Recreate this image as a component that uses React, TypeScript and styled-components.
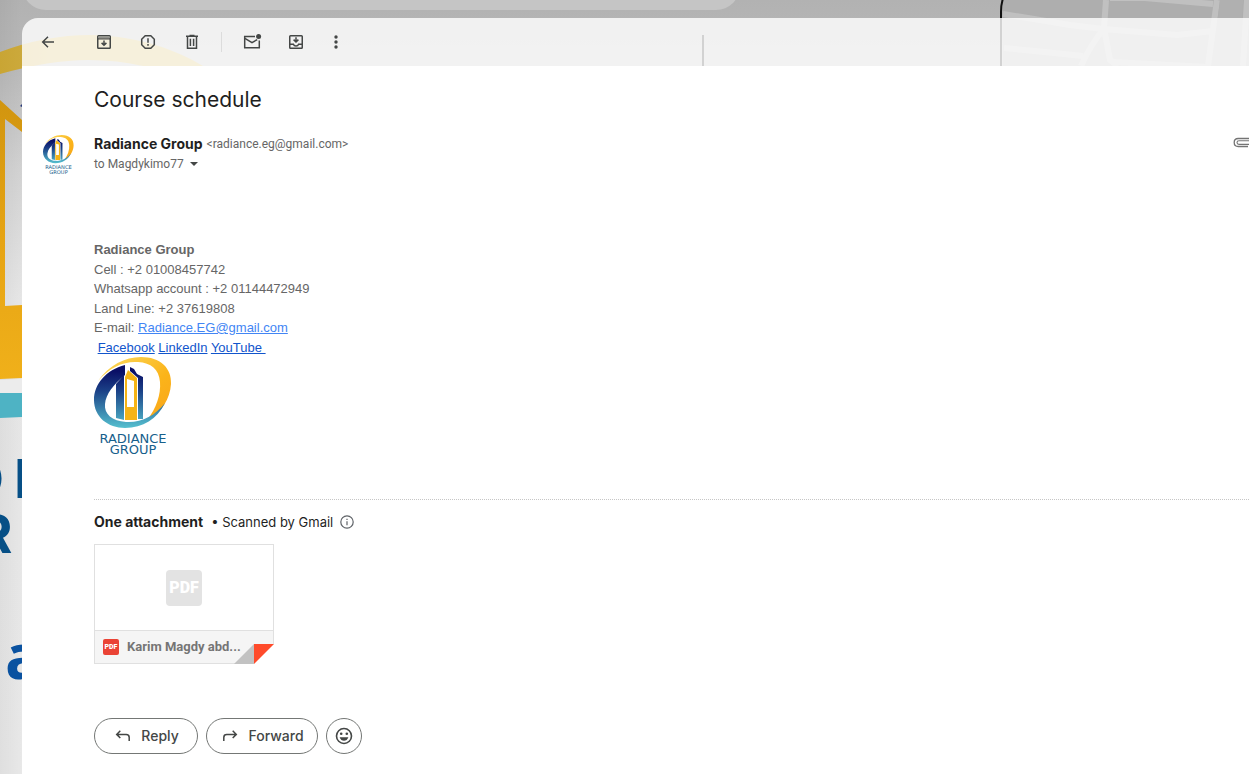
import React from 'react';
import styled, { createGlobalStyle } from 'styled-components';

const GlobalStyle = createGlobalStyle`
  *, *::before, *::after { box-sizing: border-box; }
  body { margin: 0; font-family: Inter, "Liberation Sans", sans-serif; color: #1f1f1f; }
  button { font: inherit; color: inherit; cursor: pointer; }
  svg { display: block; }
`;

const Page = styled.div`
  position: relative;
  display: flex;
  flex-direction: column;
  min-height: 100vh;
  overflow: hidden;
  background: linear-gradient(#b2b2b2 0, #b9b9b9 66px, #d2d2d2 170px, #e6e6e6 300px, #e8e8e8 100%);
`;

const WallpaperSvg = styled.svg`
  position: absolute;
  top: 0;
  left: 0;
  width: 100%;
  height: 100%;
`;

const TopStrip = styled.header`
  position: relative;
  display: flex;
  align-items: flex-end;
  height: 18px;
  padding: 0 0 8px 22px;
  overflow: hidden;
`;

const SearchBar = styled.div`
  flex: 0 1 718px;
  height: 48px;
  border-radius: 24px;
  background: #c5c5c5;
`;

const Panel = styled.main`
  position: relative;
  display: flex;
  flex: 1;
  flex-direction: column;
  margin-left: 22px;
  border-top-left-radius: 16px;
  overflow: hidden;
`;

const Toolbar = styled.nav`
  display: flex;
  align-items: center;
  gap: 16px;
  height: 48px;
  padding-left: 12px;
  background: rgba(255, 255, 255, 0.81);
`;

const IconButton = styled.button<{ $after?: number }>`
  display: grid;
  place-items: center;
  width: 28px;
  height: 28px;
  margin: 0 ${p => p.$after ?? 0}px 0 0;
  padding: 0;
  border: 0;
  background: none;
  color: #444746;
`;

const Divider = styled.span`
  width: 1px;
  height: 20px;
  margin-left: -1px;
  background: #dcdcdc;
`;

const Message = styled.article`
  flex: 1;
  padding: 16px 0 20px 72px;
  background: #fff;
`;

const Subject = styled.h1`
  margin: 0;
  font: 400 21px/36px Inter, sans-serif;
`;

const SenderRow = styled.section`
  display: flex;
  align-items: flex-start;
  margin: 16px 0 0 -52px;
`;

const Avatar = styled.div`
  flex: none;
  width: 52px;
  padding: 1px 0 0 1px;
`;

const SenderText = styled.div`
  flex: 1;
`;

const SenderLine = styled.div`
  display: flex;
  align-items: center;
  gap: 4px;
  font: 400 12px/20px Roboto, sans-serif;
  color: #666;
`;

const SenderName = styled.span`
  font: 700 14px/20px Inter, sans-serif;
  color: #1f1f1f;
`;

const Recipient = styled.button`
  display: flex;
  align-items: center;
  gap: 6px;
  padding: 0;
  border: 0;
  background: none;
`;

const ClipIcon = styled.svg`
  flex: none;
`;

const Signature = styled.section`
  margin-top: 66px;
  font: 400 13px/1.5 "Liberation Sans", Arial, sans-serif;
  color: #666;
`;

const SignatureLink = styled.a<{ $light?: boolean }>`
  color: ${p => (p.$light ? '#4285f4' : '#1155cc')};
`;

const Attachments = styled.section`
  margin-top: 44px;
  border-top: 1px dotted #c6c6c6;
`;

const AttachmentTitle = styled.h2`
  display: flex;
  align-items: center;
  margin: 12px 0;
  font: 400 13px/20px Inter, sans-serif;
`;

const AttachmentCount = styled.span`
  margin-right: 8px;
  font: 700 14px/20px Inter, sans-serif;
`;

const InfoIcon = styled.svg`
  margin-left: 6px;
`;

const Card = styled.a`
  position: relative;
  display: flex;
  flex-direction: column;
  width: 180px;
  height: 120px;
  border: 1px solid #e0e0e0;
  color: #757575;
  text-decoration: none;
`;

const Preview = styled.div`
  display: grid;
  flex: 1;
  place-items: center;
`;

const PdfBadge = styled.span<{ $large?: boolean }>`
  display: grid;
  place-items: center;
  width: ${p => (p.$large ? 36 : 16)}px;
  height: ${p => (p.$large ? 36 : 16)}px;
  border-radius: ${p => (p.$large ? 4 : 2)}px;
  background: ${p => (p.$large ? '#e3e3e3' : '#ea4335')};
  color: #fff;
  font: 900 ${p => (p.$large ? 16 : 7)}px/1 Roboto, sans-serif;
`;

const FileBar = styled.div`
  display: flex;
  align-items: center;
  gap: 8px;
  height: 33px;
  padding-left: 8px;
  border-top: 1px solid #e0e0e0;
  background: #f5f5f5;
  font: 700 13px/20px Roboto, sans-serif;
`;

const Fold = styled.svg`
  position: absolute;
  right: -1px;
  bottom: -1px;
`;

const Actions = styled.footer`
  display: flex;
  gap: 8px;
  margin-top: 54px;
`;

const ActionButton = styled.button<{ $width: number }>`
  display: flex;
  align-items: center;
  justify-content: center;
  gap: 8px;
  width: ${p => p.$width}px;
  height: 36px;
  padding: 0;
  border: 1px solid #747775;
  border-radius: 18px;
  background: #fff;
  color: #444746;
  font: 500 14px/20px Inter, sans-serif;
`;

function Wallpaper() {
  return (
    <WallpaperSvg aria-hidden="true">
      <defs>
        <linearGradient id="wallGold" x1="0" y1="100" x2="0" y2="380" gradientUnits="userSpaceOnUse">
          <stop offset="0" stopColor="#d1950f" />
          <stop offset="0.5" stopColor="#e6a414" />
          <stop offset="1" stopColor="#f0b01a" />
        </linearGradient>
        <linearGradient id="wallArc" x1="0" y1="0" x2="60" y2="0" gradientUnits="userSpaceOnUse">
          <stop offset="0" stopColor="#c9a534" />
          <stop offset="1" stopColor="#d0b048" />
        </linearGradient>
        <linearGradient id="wallShade" x1="0" y1="0" x2="22" y2="0" gradientUnits="userSpaceOnUse">
          <stop offset="0" stopColor="#000" stopOpacity="0.04" />
          <stop offset="1" stopColor="#000" stopOpacity="0" />
        </linearGradient>
      </defs>
      <rect width="22" height="100%" fill="url(#wallShade)" />
      <path d="M0 52Q45 35 90 35C140 36 176 50 203 66H143Q118 60 88 60Q50 60 0 74Z" fill="url(#wallArc)" />
      <path d="M0 100L22 120V132L5 119V306L22 305V378L0 379Z" fill="url(#wallGold)" />
      <path d="M20 106L22 104V107Z" fill="#2a3a7a" />
      <path d="M0 380L22 379V393H0Z" fill="#ececec" />
      <path d="M0 393H22V417L0 418Z" fill="#4eb3c4" />
      <g fill="#064f86" fontFamily="Inter, sans-serif" fontWeight="700">
        <text x="-35" y="498" fontSize="54">D</text>
        <text x="14" y="498" fontSize="54">I</text>
        <text x="-23" y="553" fontSize="54">R</text>
      </g>
      <text x="5" y="679" fontSize="62" fontFamily="Open Sans, sans-serif" fontWeight="700" fill="#0a52a0">a</text>
      <path d="M703 35V66" stroke="#111" strokeWidth="2" />
      <path d="M1003 0H1249V66H1003Z" fill="#aeaeae" />
      <g fill="none" stroke="#c0c0c0" strokeWidth="6">
        <path d="M1003 14L1040 20L1070 25L1103 29L1177 35L1213 31" />
        <path d="M1106 0L1104 28L1110 60L1118 66" />
        <path d="M1102 31Q1090 46 1081 66" />
        <path d="M1004 48L1035 51L1083 56" />
        <path d="M1110 -2H1145L1213 4" />
        <path d="M1217 0L1208 66" />
        <path d="M1247 0L1243 66" />
        <path d="M1112 62L1208 67" />
      </g>
      <path d="M1220 0H1243L1239 66H1212Z" fill="#b0b0b0" />
      <path d="M1006 -8Q1001 0 1001 12V66" fill="none" stroke="#111" strokeWidth="2" />
    </WallpaperSvg>
  );
}

function RadianceLogo({ id, width, height }: { id: string; width: number; height: number }) {
  return (
    <svg width={width} height={height} viewBox="0 0 78 98" overflow="visible" role="img" aria-label="Radiance Group">
      <defs>
        <linearGradient id={`${id}Blue`} x1="0" y1="8" x2="0" y2="71" gradientUnits="userSpaceOnUse">
          <stop offset="0.1" stopColor="#0a0f66" />
          <stop offset="0.4" stopColor="#1a3f86" />
          <stop offset="1" stopColor="#55c0cf" />
        </linearGradient>
        <linearGradient id={`${id}Gold`} x1="0" y1="0" x2="1" y2="1">
          <stop offset="0" stopColor="#fbdc62" />
          <stop offset="0.6" stopColor="#fbb41a" />
          <stop offset="1" stopColor="#f9a51a" />
        </linearGradient>
      </defs>
      <path
        d="M4 24C15 8 31 0 47 0C66 0 78 11 77 27C76 42 68 55 54 62C62 51 67 38 66 25C65 12 57 6 44 5C30 4 16 10 4 24Z"
        fill={`url(#${id}Gold)`}
      />
      <path
        d="M31 8C12 13 0 27 0 43C0 60 14 71 31 71C49 71 63 62 71 46C61 59 47 66 32 65C18 64 10 57 11 47C12 37 19 28 31 18Z"
        fill={`url(#${id}Blue)`}
      />
      <path d="M22 27L30 18V63L22 61Z" fill={`url(#${id}Blue)`} />
      <path d="M31 20L34 13L43 21V63H31ZM33 22V50H40V24Z" fill="#f5b416" fillRule="evenodd" />
      <path d="M36 10L40 12L43 17L49 20V62H44V21L36 14Z" fill={`url(#${id}Blue)`} />
      <g fill="#17608c" fontFamily="DejaVu Sans, sans-serif" fontSize="13" textAnchor="middle">
        <text x="39" y="86">RADIANCE</text>
        <text x="39" y="97">GROUP</text>
      </g>
    </svg>
  );
}

function ToolIcon({ children }: { children: React.ReactNode }) {
  return (
    <svg width="20" height="20" viewBox="0 0 20 20" fill="none" stroke="currentColor" strokeWidth="1.5" aria-hidden="true">
      {children}
    </svg>
  );
}

export default function App() {
  return (
    <Page>
      <GlobalStyle />
      <Wallpaper />
      <TopStrip>
        <SearchBar />
      </TopStrip>
      <Panel>
        <Toolbar aria-label="Message tools">
          <IconButton aria-label="Back" $after={12}>
            <ToolIcon>
              <path d="M16 10H5M10 4.7L4.7 10L10 15.3" />
            </ToolIcon>
          </IconButton>
          <IconButton aria-label="Archive">
            <ToolIcon>
              <rect x="3.75" y="3.75" width="12.5" height="12.5" rx="0.8" />
              <path d="M4 5.2H16" stroke="#90918c" />
              <path d="M3.5 6.8H16.5" strokeWidth="1.2" />
              <path d="M10 8.6V13M7.6 10.9L10 13.3L12.4 10.9" />
            </ToolIcon>
          </IconButton>
          <IconButton aria-label="Report spam">
            <ToolIcon>
              <path d="M7.2 3.7H12.8L16.3 7.2V12.8L12.8 16.3H7.2L3.7 12.8V7.2Z" />
              <path d="M10 6.3V10.8M10 12.1V13.7" />
            </ToolIcon>
          </IconButton>
          <IconButton aria-label="Delete">
            <ToolIcon>
              <path d="M4 4.3H16M7.5 3.4H12.5" />
              <path d="M5.5 4.5V16.2H14.5V4.5" />
              <path d="M8.4 6.7V14M11.6 6.7V14" />
            </ToolIcon>
          </IconButton>
          <Divider />
          <IconButton aria-label="Mark as unread">
            <ToolIcon>
              <path d="M13 4.6H2.7V15.8H17.3V8.4" />
              <path d="M2.9 6.4L10 10.6L15.2 7.6" />
              <circle cx="16.6" cy="4.4" r="2.5" fill="currentColor" stroke="none" />
            </ToolIcon>
          </IconButton>
          <IconButton aria-label="Move to inbox" $after={-4}>
            <ToolIcon>
              <rect x="3.75" y="3.75" width="12.5" height="12.5" rx="0.8" />
              <path d="M4 12.2H7.4Q8 14 10 14T12.6 12.2H16" />
              <path d="M10 5.2V9.6M7.6 7.6L10 10L12.4 7.6" />
            </ToolIcon>
          </IconButton>
          <IconButton aria-label="More">
            <ToolIcon>
              <g fill="currentColor" stroke="none">
                <circle cx="10" cy="5" r="1.7" />
                <circle cx="10" cy="10" r="1.7" />
                <circle cx="10" cy="15" r="1.7" />
              </g>
            </ToolIcon>
          </IconButton>
        </Toolbar>
        <Message>
          <Subject>Course schedule</Subject>
          <SenderRow>
            <Avatar>
              <RadianceLogo id="avatar" width={31} height={39} />
            </Avatar>
            <SenderText>
              <SenderLine>
                <SenderName>Radiance Group</SenderName>
                <span>&lt;radiance.eg@gmail.com&gt;</span>
              </SenderLine>
              <SenderLine>
                <Recipient aria-label="Show details">
                  to Magdykimo77
                  <svg width="8" height="4" viewBox="0 0 8 4" aria-hidden="true">
                    <path d="M0 0H8L4 4Z" fill="#444746" />
                  </svg>
                </Recipient>
              </SenderLine>
            </SenderText>
            <ClipIcon width="16" height="18" viewBox="0 0 16 18" fill="none" stroke="#747474" role="img" aria-label="Has attachment">
              <path d="M16 4.5H5.2C2.6 4.5 1.2 6.2 1.2 8.5S2.6 12.5 5.2 12.5H15" strokeWidth="1.3" />
              <path d="M16 6.8H6C4.8 6.8 4 7.5 4 8.6S4.8 10.4 6 10.4H16" strokeWidth="1.1" />
            </ClipIcon>
          </SenderRow>
          <Signature>
            <b>Radiance Group</b>
            <div>Cell : +2 01008457742</div>
            <div>Whatsapp account : +2 01144472949</div>
            <div>Land Line: +2 37619808</div>
            <div>
              E-mail: <SignatureLink $light href="mailto:Radiance.EG@gmail.com">Radiance.EG@gmail.com</SignatureLink>
            </div>
            <div>
              &nbsp;<SignatureLink href="#facebook">Facebook</SignatureLink>{' '}
              <SignatureLink href="#linkedin">LinkedIn</SignatureLink>{' '}
              <SignatureLink href="#youtube">YouTube&nbsp;</SignatureLink>
            </div>
            <RadianceLogo id="signature" width={78} height={98} />
          </Signature>
          <Attachments>
            <AttachmentTitle>
              <AttachmentCount>One attachment</AttachmentCount>
              • Scanned by Gmail
              <InfoIcon width="16" height="16" viewBox="0 0 16 16" fill="none" stroke="#5f6368" strokeWidth="1.2" role="img" aria-label="Information">
                <circle cx="8" cy="8" r="6.2" />
                <path d="M8 7.2V11.2M8 4.7V6" />
              </InfoIcon>
            </AttachmentTitle>
            <Card href="#attachment">
              <Preview>
                <PdfBadge $large>PDF</PdfBadge>
              </Preview>
              <FileBar>
                <PdfBadge>PDF</PdfBadge>
                Karim Magdy abd...
              </FileBar>
              <Fold width="40" height="20" viewBox="0 0 40 20" aria-hidden="true">
                <path d="M20 0H40V20H20Z" fill="#fff" />
                <path d="M0 20L20 0V20Z" fill="#c2c2c2" />
                <path d="M20 0H40L20 20Z" fill="#ff4b2b" />
              </Fold>
            </Card>
          </Attachments>
          <Actions>
            <ActionButton $width={104}>
              <ToolIcon>
                <path d="M7.3 4.8L3.7 8.4L7.3 12M4 8.4H13.2Q16.2 8.4 16.2 11.4V15" />
              </ToolIcon>
              Reply
            </ActionButton>
            <ActionButton $width={112}>
              <ToolIcon>
                <path d="M12.7 4.8L16.3 8.4L12.7 12M16 8.4H6.8Q3.8 8.4 3.8 11.4V15" />
              </ToolIcon>
              Forward
            </ActionButton>
            <ActionButton $width={36} aria-label="Add reaction">
              <ToolIcon>
                <circle cx="10" cy="10" r="7.5" strokeWidth="1.6" />
                <g fill="currentColor" stroke="none">
                  <circle cx="7.2" cy="7.7" r="1.3" />
                  <circle cx="12.8" cy="7.7" r="1.3" />
                  <path d="M5.6 11.2H14.4Q13 14.8 10 14.8T5.6 11.2Z" />
                </g>
              </ToolIcon>
            </ActionButton>
          </Actions>
        </Message>
      </Panel>
    </Page>
  );
}
